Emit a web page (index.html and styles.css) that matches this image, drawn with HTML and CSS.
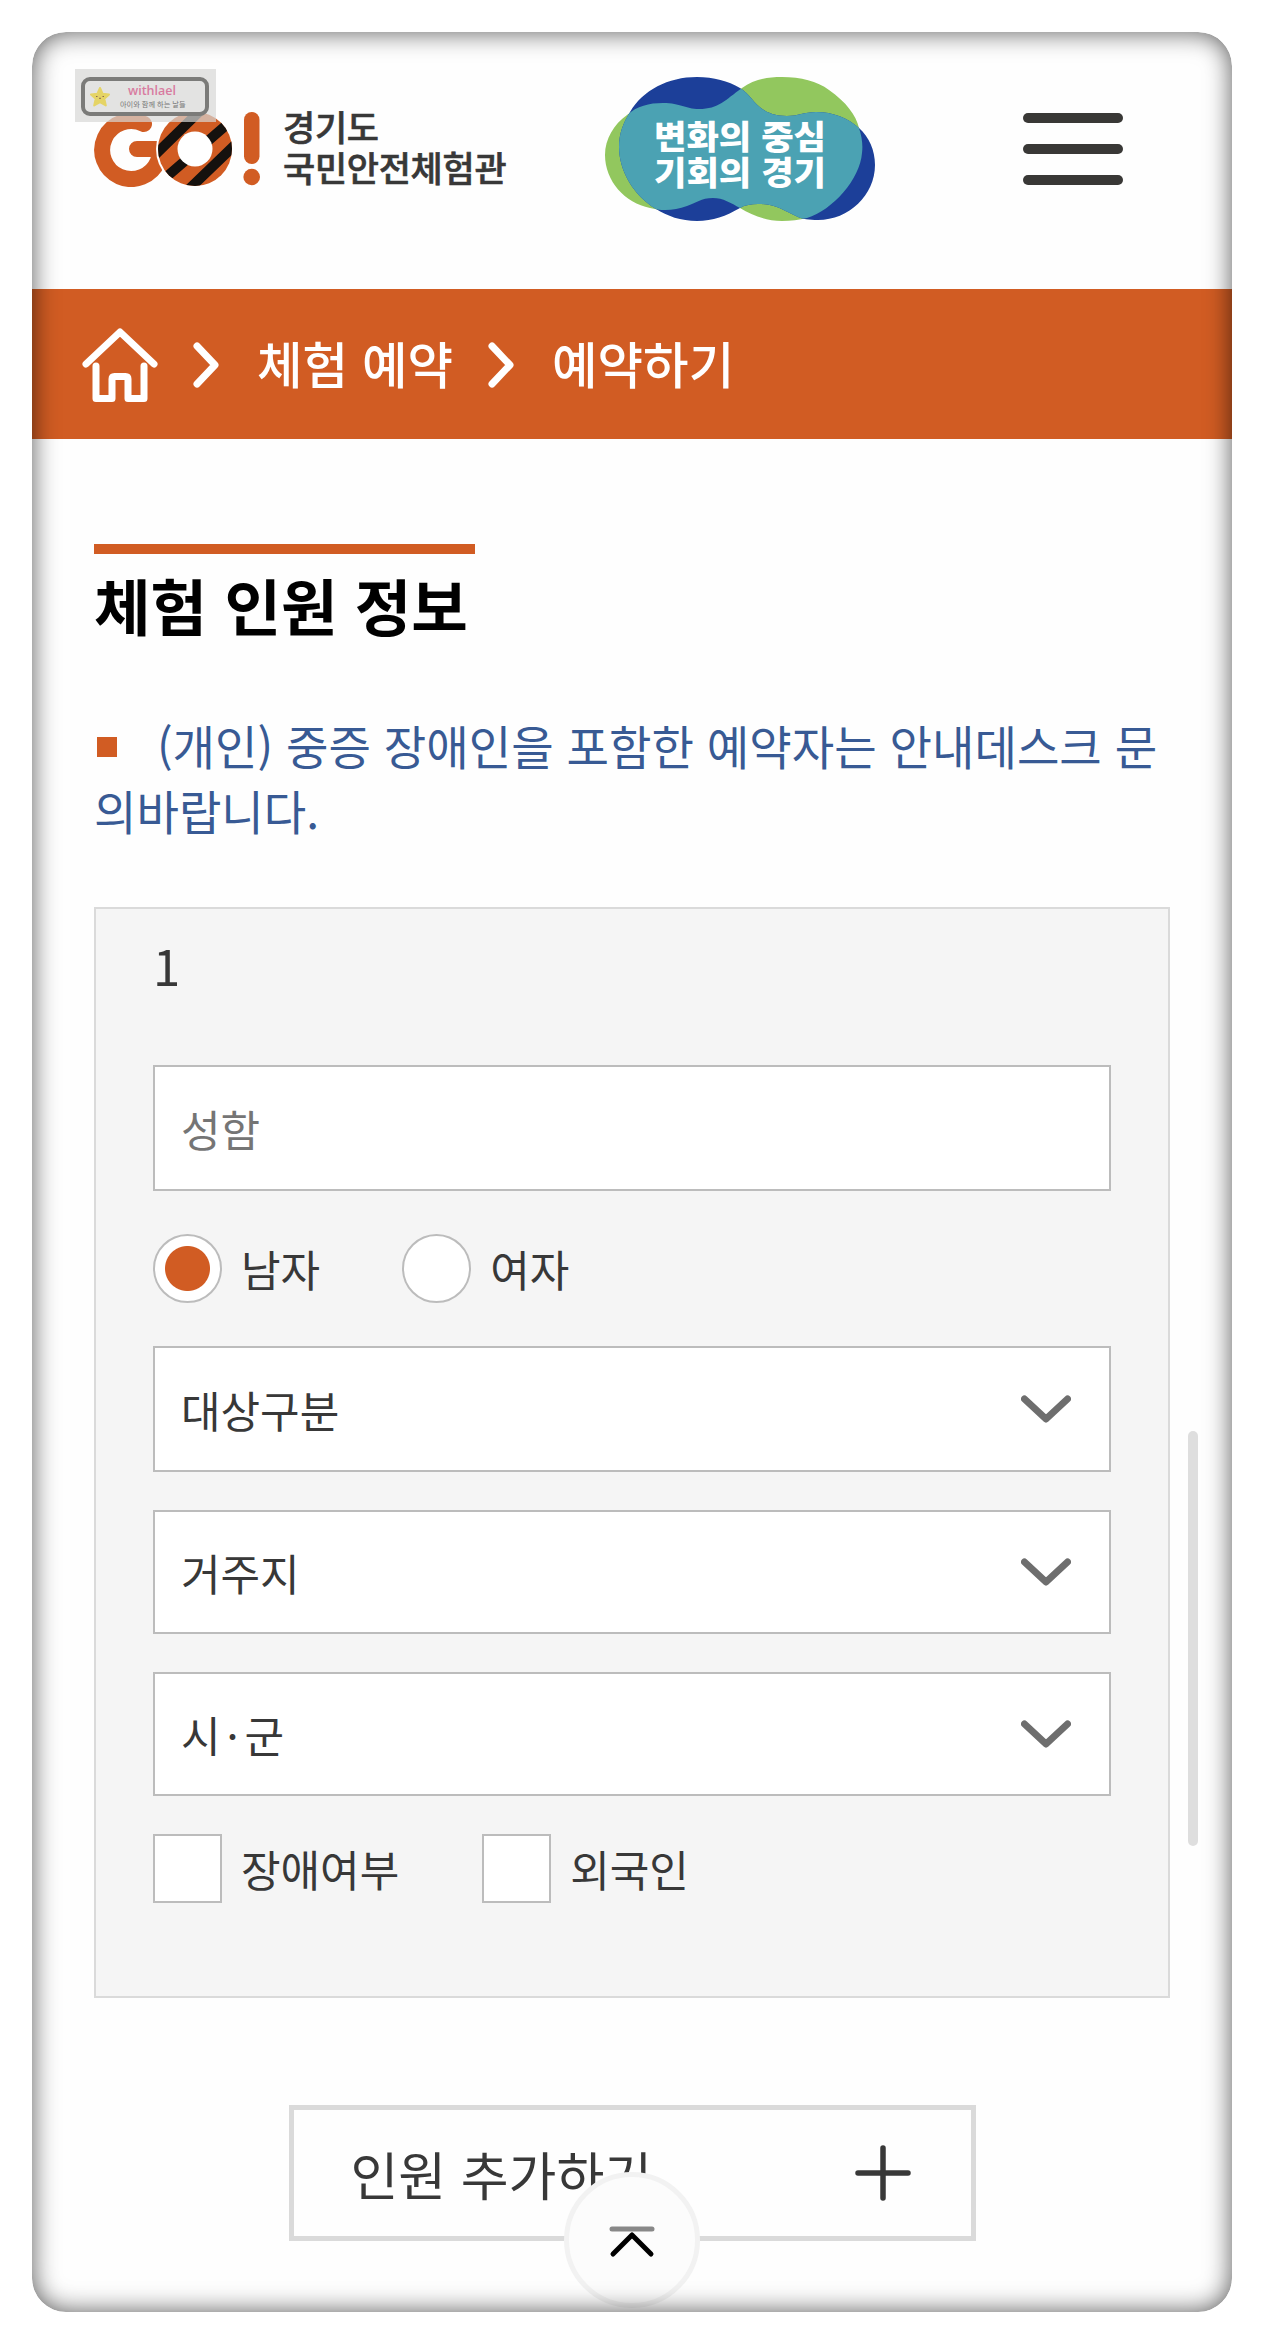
FILE: index.html
```html
<!DOCTYPE html>
<html lang="ko">
<head>
  <meta charset="UTF-8">
  <meta name="viewport" content="width=device-width, initial-scale=1">
  <title>경기도 국민안전체험관</title>
  <link rel="stylesheet" href="styles.css">
</head>
<body>
  <div class="screen">
    <header class="header">
      <a class="logo" href="#">
        <svg class="logo-mark" width="166" height="76" viewBox="0 0 166 76">
          <defs>
            <clipPath id="ring"><circle cx="101" cy="38" r="37"/></clipPath>
          </defs>
          <path d="M50 13 A29 29 0 1 0 64 50 Q66 44 65 38 H43" fill="none" stroke="#d15c23" stroke-width="16" stroke-linecap="round" stroke-linejoin="round"/>
          <circle cx="101" cy="38" r="39" fill="#fff"/>
          <circle cx="101" cy="38" r="37" fill="#d15c23"/>
          <g clip-path="url(#ring)" stroke="#15110e" stroke-width="10">
            <path d="M58 47 L112 -6M70 68 L137 10M90 83 L145 30"/>
          </g>
          <circle cx="101" cy="38" r="17.5" fill="#fff"/>
          <rect x="150" y="1" width="15.5" height="52" rx="7.7" fill="#d15c23"/>
          <circle cx="157.7" cy="66" r="8.3" fill="#d15c23"/>
        </svg>
        <span class="logo-text">경기도<br>국민안전체험관</span>
      </a>

      <svg class="emblem" width="270" height="144" viewBox="0 0 270 144">
        <defs>
          <path id="green-blob" d="M0 78 C0 62 9 47 22 38 C32 29 44 26 58 26 C76 26 80 32 94 32 C114 32 120 23 137 11 C148 3 161 0 177 0 C196 0 212 4 224 13 C241 25 251 38 254 51 C257 60 258 68 257 76 C255 102 228 133 202 141 C194 143 186 144 177 144 C160 144 147 138 135 131 C126 126 118 121 108 121 C96 121 91 126 82 129 C69 134 56 134 45 131 C20 126 0 104 0 78Z"/>
          <clipPath id="green-clip"><use href="#green-blob"/></clipPath>
          <path id="blue-blob" d="M14 70 C14 57 18 46 25 35 C38 13 63 0 92 0 C109 0 123 4 135 11 C149 19 152 39 182 39 C193 39 199 35 211 35 C228 35 243 41 254 51 C264 60 270 73 270 88 C270 118 244 143 213 143 C204 143 197 142 193 140 C177 133 171 127 153 127 C146 127 140 128 135 131 C121 139 108 144 92 144 C76 144 62 139 51 132 C29 119 14 94 14 70Z"/>
        </defs>
        <use href="#green-blob" fill="#92c75e"/>
        <use href="#blue-blob" fill="#1c3f99"/>
        <use href="#blue-blob" fill="#4ba2b3" clip-path="url(#green-clip)"/>
        <text class="emblem-text" x="49" y="72" textLength="172" lengthAdjust="spacingAndGlyphs">변화의 중심</text>
        <text class="emblem-text" x="49" y="108" textLength="172" lengthAdjust="spacingAndGlyphs">기회의 경기</text>
      </svg>

      <button class="menu-btn" aria-label="메뉴">
        <span></span><span></span><span></span>
      </button>

      <div class="watermark">
        <div class="watermark-box">
          <svg width="20" height="20" viewBox="0 0 20 20">
            <path d="M10 1 L12.7 6.8 L19 7.4 L14.3 11.8 L15.8 18.5 L10 15.2 L4.2 18.5 L5.7 11.8 L1 7.4 L7.3 6.8Z" fill="#e5d466" stroke="#e5d466" stroke-width="2" stroke-linejoin="round"/>
            <path d="M6 9.5h1.5M12.5 9.5H14M9 11q1 1.2 2 0" fill="none" stroke="#8c6a50"/>
          </svg>
          <div class="watermark-text">
            <strong>withlael</strong>
            <small>아이와 함께 하는 날들</small>
          </div>
        </div>
      </div>
    </header>

    <nav class="breadcrumb">
      <svg class="home" width="76" height="76" viewBox="0 0 76 76">
        <path d="M4 37 L38 5 L72 37M14 39 V71.5 H30 V52 Q30 49.5 32.5 49.5 H43.5 Q46 49.5 46 52 V71.5 H62 V39"/>
      </svg>
      <svg class="arrow" width="26" height="46" viewBox="0 0 26 46"><path d="M4 4 L22 23 L4 42"/></svg>
      <a href="#">체험 예약</a>
      <svg class="arrow" width="26" height="46" viewBox="0 0 26 46"><path d="M4 4 L22 23 L4 42"/></svg>
      <a href="#">예약하기</a>
    </nav>

    <main>
      <h1>체험 인원 정보</h1>
      <p class="notice">(개인) 중증 장애인을 포함한 예약자는 안내데스크 문의바랍니다.</p>

      <section class="person">
        <div class="number">1</div>
        <input class="field" type="text" placeholder="성함">

        <div class="options gender">
          <label><span class="radio checked"></span>남자</label>
          <label><span class="radio"></span>여자</label>
        </div>

        <div class="field select first">
          대상구분
          <svg width="50" height="30" viewBox="0 0 50 30"><path d="M3.5 5 L25 25 L46.5 5"/></svg>
        </div>
        <div class="field select">
          거주지
          <svg width="50" height="30" viewBox="0 0 50 30"><path d="M3.5 5 L25 25 L46.5 5"/></svg>
        </div>
        <div class="field select">
          <span>시<span class="dot">·</span>군</span>
          <svg width="50" height="30" viewBox="0 0 50 30"><path d="M3.5 5 L25 25 L46.5 5"/></svg>
        </div>

        <div class="options extra">
          <label><span class="check"></span>장애여부</label>
          <label><span class="check"></span>외국인</label>
        </div>
      </section>

      <button class="add-btn">
        인원 추가하기
        <svg width="58" height="58" viewBox="0 0 58 58"><path d="M29 4 V54M4 29 H54"/></svg>
      </button>
    </main>

    <button class="top-btn" aria-label="맨 위로">
      <svg width="46" height="34" viewBox="0 0 46 34">
        <path d="M3 4 H43" stroke="#888"/>
        <path d="M4 29 L23 10 L42 29" stroke="#000"/>
      </svg>
    </button>
    <div class="scrollbar"></div>
  </div>
</body>
</html>
```
FILE: styles.css
```css
:root {
  --orange: #d15c23;
  --text: #383838;
  --line: #bcbcbc;
}

* {
  margin: 0;
  padding: 0;
  box-sizing: border-box;
}

body {
  background: #fff;
  color: var(--text);
  font-family: "Noto Sans CJK KR", sans-serif;
  padding: 32px;
}

a {
  color: inherit;
  text-decoration: none;
}

button {
  font: inherit;
  color: inherit;
}

.screen {
  position: relative;
  width: 1200px;
  height: 2280px;
  border-radius: 34px;
  background: #fefefe;
  overflow: hidden;
}

/* inner shadow has to lie above the orange bar */
.screen::after {
  content: "";
  position: absolute;
  inset: 0;
  border-radius: 34px;
  box-shadow: inset 0 0 26px rgba(0, 0, 0, 0.66);
  pointer-events: none;
}

/* Header */
.header {
  position: relative;
  height: 257px;
  display: flex;
  align-items: flex-start;
  padding-left: 62px;
}

.logo {
  display: flex;
  width: 413px;
  margin-top: 79px;
}

.logo-mark {
  flex: none;
}

.logo-text {
  margin-left: 23px;
  font-size: 35px;
  font-weight: 500;
  -webkit-text-stroke: 0.6px var(--text);
  line-height: 41px;
  letter-spacing: -0.3px;
  margin-top: -6px;
  white-space: nowrap;
}

.emblem {
  margin: 45px 0 0 98px;
}

.emblem-text {
  fill: #fff;
  font-size: 33px;
  font-weight: 900;
}

.menu-btn {
  display: flex;
  flex-direction: column;
  gap: 21px;
  width: 100px;
  margin: 81px 0 0 148px;
  border: 0;
  background: none;
}

.menu-btn span {
  height: 10px;
  border-radius: 5px;
  background: #393836;
}

.watermark {
  position: absolute;
  left: 43px;
  top: 37px;
  width: 141px;
  height: 53px;
  padding: 8px 7px 6px 6px;
  background: rgba(215, 215, 213, 0.7);
}

.watermark-box {
  display: flex;
  align-items: center;
  height: 39px;
  padding-left: 5px;
  border: 4px solid #7b7b79;
  border-radius: 9px;
}

.watermark-text {
  flex: 1;
  display: flex;
  flex-direction: column;
  padding-left: 10px;
}

.watermark-text strong {
  padding-left: 8px;
  color: #d87ba0;
  font: 600 12.5px/14px "Open Sans", sans-serif;
}

.watermark-text small {
  color: #777;
  font-size: 7.2px;
  line-height: 12px;
  white-space: nowrap;
}

/* Breadcrumb */
.breadcrumb {
  height: 150px;
  display: flex;
  align-items: center;
  padding: 2px 0 0 50px;
  background: var(--orange);
  color: #fff;
  font-size: 49.5px;
  font-weight: 500;
}

.breadcrumb svg {
  fill: none;
  stroke: #fff;
  stroke-width: 7;
  stroke-linecap: round;
  stroke-linejoin: round;
}

.breadcrumb a {
  line-height: 70px;
  margin-top: -4px;
}

.arrow {
  margin: 0 38px 0 35px;
}

/* Content */
main {
  padding: 105px 62px 0;
}

h1 {
  width: 381px;
  padding-top: 6px;
  border-top: 10px solid var(--orange);
  color: #000;
  font-size: 61.5px;
  font-weight: 700;
  line-height: 90px;
  white-space: nowrap;
}

.notice {
  margin: 62px -5px 0 0;
  color: #385a94;
  font-size: 46.15px;
  line-height: 65px;
  word-break: break-all;
}

.notice::before {
  content: "";
  display: inline-block;
  width: 20px;
  height: 20px;
  margin: 0 40px 0 3px;
  vertical-align: 8px;
  background: var(--orange);
}

.person {
  height: 1091px;
  margin-top: 65px;
  padding: 21px 57px 0 57px;
  border: 2px solid #dadada;
  background: #f5f5f5;
}

.number {
  height: 135px;
  font-size: 49px;
  line-height: 70px;
}

.field {
  display: block;
  width: 100%;
  height: 126px;
  padding: 0 38px 0 26px;
  border: 2px solid var(--line);
  background: #fff;
  color: var(--text);
  font: 43px "Noto Sans CJK KR", sans-serif;
}

.field::placeholder {
  color: #757575;
}

.select {
  display: flex;
  align-items: center;
  justify-content: space-between;
  height: 124px;
  margin-top: 38px;
}

.select.first {
  height: 126px;
}

.select svg {
  fill: none;
  stroke: #6e6e6e;
  stroke-width: 7;
  stroke-linecap: round;
  stroke-linejoin: round;
}

.dot {
  margin: 0 6px;
}

.options {
  display: flex;
  font-size: 43px;
  line-height: 69px;
}

.options label {
  display: flex;
}

.gender {
  gap: 82px;
  margin: 43px 0;
}

.extra {
  gap: 83px;
  margin-top: 38px;
}

.radio,
.check {
  width: 69px;
  height: 69px;
  margin-right: 19px;
  border: 2px solid var(--line);
  background: #fff;
}

.radio {
  border-radius: 50%;
}

.radio.checked {
  background: radial-gradient(circle, var(--orange) 22px, #fff 23px);
}

.add-btn {
  display: flex;
  align-items: center;
  justify-content: space-between;
  width: 687px;
  height: 136px;
  margin: 107px auto 0;
  padding: 0 59px 0 57px;
  border: 5px solid #dadada;
  background: #fefefe;
  font-size: 52px;
}

.add-btn svg {
  stroke: var(--text);
  stroke-width: 5.5;
  stroke-linecap: round;
}

/* Floating parts */
.top-btn {
  position: absolute;
  left: 532px;
  top: 2140px;
  width: 136px;
  height: 136px;
  padding-top: 9px;
  border: 5px solid #f2f2f2;
  border-radius: 50%;
  background: #fcfcfc;
}

.top-btn svg {
  fill: none;
  stroke-width: 5;
  stroke-linecap: round;
  stroke-linejoin: round;
}

.scrollbar {
  position: absolute;
  left: 1156px;
  top: 1399px;
  width: 10px;
  height: 415px;
  border-radius: 5px;
  background: #dedede;
}
```
